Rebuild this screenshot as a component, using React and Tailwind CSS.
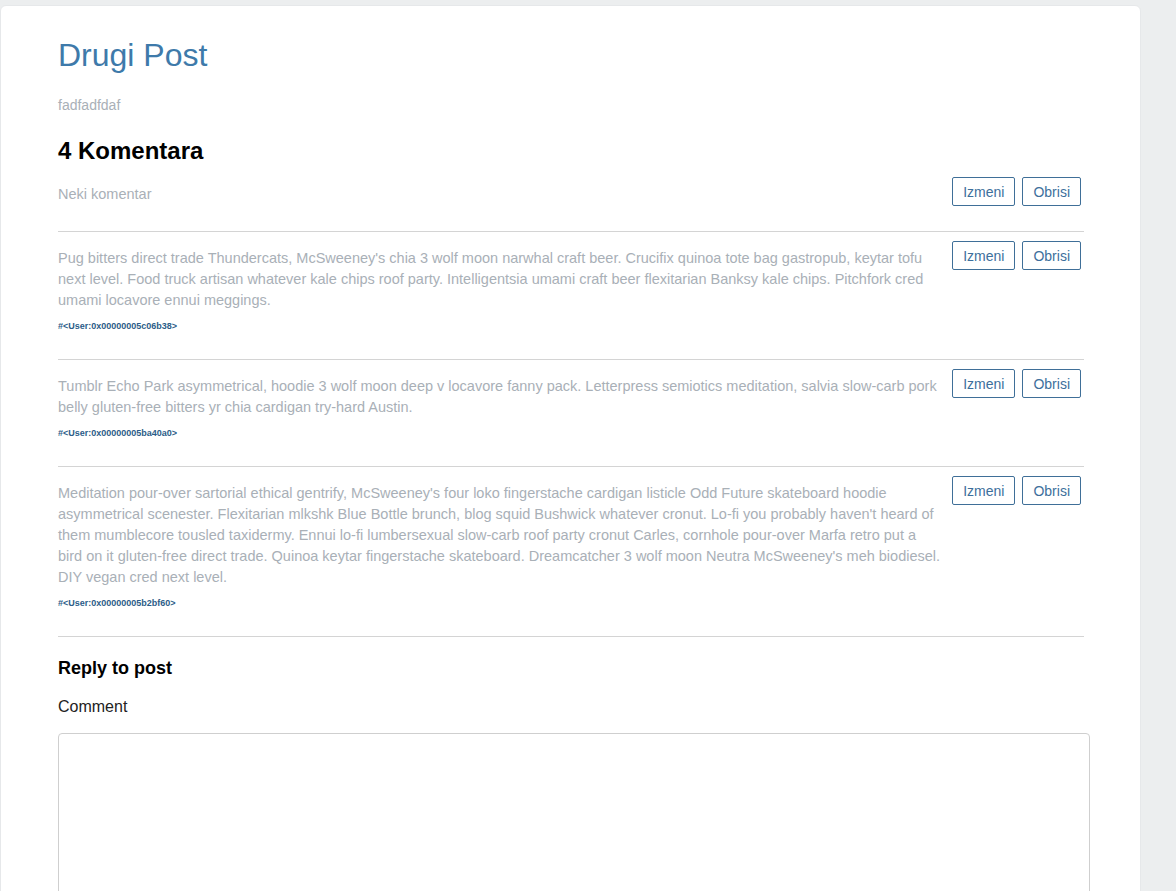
const comments = [
  { body: "Neki komentar", user: null },
  {
    body: "Pug bitters direct trade Thundercats, McSweeney's chia 3 wolf moon narwhal craft beer. Crucifix quinoa tote bag gastropub, keytar tofu next level. Food truck artisan whatever kale chips roof party. Intelligentsia umami craft beer flexitarian Banksy kale chips. Pitchfork cred umami locavore ennui meggings.",
    user: "#<User:0x00000005c06b38>",
  },
  {
    body: "Tumblr Echo Park asymmetrical, hoodie 3 wolf moon deep v locavore fanny pack. Letterpress semiotics meditation, salvia slow-carb pork belly gluten-free bitters yr chia cardigan try-hard Austin.",
    user: "#<User:0x00000005ba40a0>",
  },
  {
    body: "Meditation pour-over sartorial ethical gentrify, McSweeney's four loko fingerstache cardigan listicle Odd Future skateboard hoodie asymmetrical scenester. Flexitarian mlkshk Blue Bottle brunch, blog squid Bushwick whatever cronut. Lo-fi you probably haven't heard of them mumblecore tousled taxidermy. Ennui lo-fi lumbersexual slow-carb roof party cronut Carles, cornhole pour-over Marfa retro put a bird on it gluten-free direct trade. Quinoa keytar fingerstache skateboard. Dreamcatcher 3 wolf moon Neutra McSweeney's meh biodiesel. DIY vegan cred next level.",
    user: "#<User:0x00000005b2bf60>",
  },
];

function Btn({ children }) {
  return (
    <button className="h-[29px] px-[10px] border border-[#3f6f98] rounded-[2px] text-[14px] text-[#3d6f9c] bg-white leading-none">
      {children}
    </button>
  );
}

export default function App() {
  return (
    <div
      className="min-h-screen bg-[#eceeef] pt-[5px] overflow-hidden"
      style={{ fontFamily: '"Liberation Sans", Arial, sans-serif' }}
    >
      <div className="w-[1141px] min-h-[900px] bg-white rounded-[6px] border border-[#e6e8ea] pl-[57px] pr-[56px] pt-[32px]">
        <h1 className="text-[32px] leading-[35px] text-[#3e7aaa]">Drugi Post</h1>
        <p className="mt-[22px] text-[14px] leading-[21px] text-[#a9b0b7]">fadfadfdaf</p>
        <h2 className="mt-[22px] text-[24px] leading-[26px] font-bold text-black">4 Komentara</h2>

        <div className="mt-[4px]">
          {comments.map((c, i) => (
            <div
              key={i}
              className={`flex items-start pt-[9px] border-b border-[#d4d4d4] ${c.user ? "pb-[27px]" : "pb-[25px]"}`}
            >
              <div className="flex-1 min-w-0 pt-[7px] pr-[8px]">
                <p className="text-[14.5px] leading-[21px] text-[#a9b0b7]">{c.body}</p>
                {c.user && (
                  <div className="mt-[9px] text-[9px] leading-[12px] font-bold text-[#2c5d88]">
                    {c.user}
                  </div>
                )}
              </div>
              <div className="flex gap-[7px] mr-[3px]">
                <Btn>Izmeni</Btn>
                <Btn>Obrisi</Btn>
              </div>
            </div>
          ))}
        </div>

        <h3 className="mt-[21px] text-[18px] leading-[20px] font-bold text-black">Reply to post</h3>
        <label className="block mt-[18px] text-[16px] leading-[22px] text-[#222]">Comment</label>
        <textarea className="block mt-[15px] w-[1032px] h-[300px] border border-[#cfcfcf] rounded-[4px] resize-none outline-none" />
      </div>
    </div>
  );
}
